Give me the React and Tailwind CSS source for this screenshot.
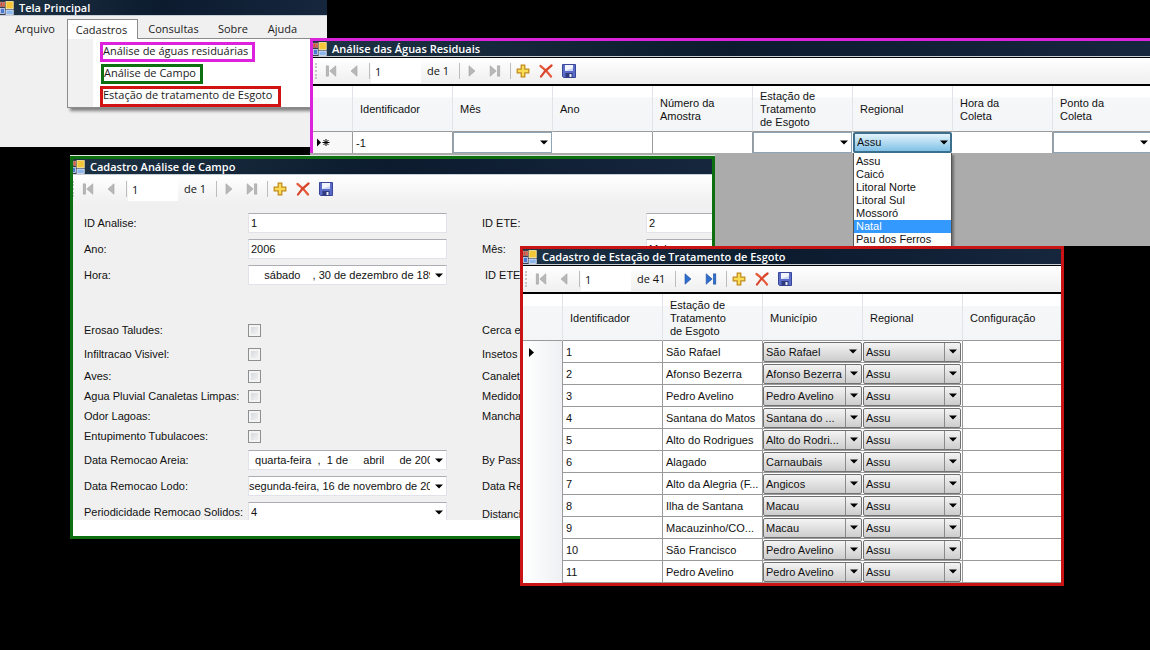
import { useState } from "react";
import clsx from "clsx";

const regionais = ["Assu", "Caicó", "Litoral Norte", "Litoral Sul", "Mossoró", "Natal", "Pau dos Ferros"];

const colunasAguas = [
    { titulo: "Identificador", valor: "-1" },
    { titulo: "Mês", combo: true },
    { titulo: "Ano" },
    { titulo: "Número da\nAmostra" },
    { titulo: "Estação de\nTratamento\nde Esgoto", combo: true },
    { titulo: "Regional", aberto: true },
    { titulo: "Hora da\nColeta" },
    { titulo: "Ponto da\nColeta", combo: true },
];

const estacoes = [
    { id: 1, nome: "São Rafael", municipio: "São Rafael" },
    { id: 2, nome: "Afonso Bezerra", municipio: "Afonso Bezerra" },
    { id: 3, nome: "Pedro Avelino", municipio: "Pedro Avelino" },
    { id: 4, nome: "Santana do Matos", municipio: "Santana do ..." },
    { id: 5, nome: "Alto do Rodrigues", municipio: "Alto do Rodri..." },
    { id: 6, nome: "Alagado", municipio: "Carnaubais" },
    { id: 7, nome: "Alto da Alegria (F...", municipio: "Angicos" },
    { id: 8, nome: "Ilha de Santana", municipio: "Macau" },
    { id: 9, nome: "Macauzinho/CO...", municipio: "Macau" },
    { id: 10, nome: "São Francisco", municipio: "Pedro Avelino" },
    { id: 11, nome: "Pedro Avelino", municipio: "Pedro Avelino" },
];

const verificacoes = [
    ["Erosao Taludes:", "Cerca entorno:"],
    ["Infiltracao Visivel:", "Insetos Aves:"],
    ["Aves:", "Canaletas:"],
    ["Agua Pluvial Canaletas Limpas:", "Medidor:"],
    ["Odor Lagoas:", "Manchas:"],
    ["Entupimento Tubulacoes:", ""],
];

function AppIcon() {
    return (
        <svg width="14" height="14" viewBox="0 0 14 14" className="shrink-0" aria-hidden="true">
            <rect width="14" height="14" fill="#3a3f4c" />
            <rect x="0.5" y="1.5" width="1.8" height="4" fill="#d8452c" stroke="#e9a493" strokeWidth="0.5" />
            <rect x="3" y="1.5" width="1.8" height="4" fill="#d8452c" stroke="#e9a493" strokeWidth="0.5" />
            <rect x="6" y="0.6" width="7.2" height="7" fill="#f2c637" stroke="#fbeeb0" strokeWidth="0.8" />
            <rect x="0.5" y="7.5" width="4" height="5" fill="#4b79cf" stroke="#c9d8f4" strokeWidth="0.8" />
            <rect x="6" y="9" width="7.2" height="4.4" fill="#8fb6ea" stroke="#e2edfb" strokeWidth="0.8" />
        </svg>
    );
}

function Caret() {
    return (
        <svg width="8" height="5" viewBox="0 0 8 5" aria-hidden="true">
            <path d="M0 0.5h8L4 4.5z" fill="#000" />
        </svg>
    );
}

function SetaIcon({ ativo, reverso, barra }) {
    const cor = ativo ? "#2f6fd0" : "#b8b8b8";
    const contorno = ativo ? "#1d4c9c" : "#a2a2a2";
    return (
        <svg width="12" height="12" viewBox="0 0 12 12" className={clsx(reverso && "-scale-x-100")} aria-hidden="true">
            <path d={barra ? "M1.2 0.8v10.4l6-5.2z" : "M3 0.8v10.4l6-5.2z"} fill={cor} stroke={contorno} strokeWidth="0.6" />
            {barra && <rect x="8.4" y="0.9" width="2.4" height="10.2" fill={cor} stroke={contorno} strokeWidth="0.6" />}
        </svg>
    );
}

function AdicionarIcon() {
    return (
        <svg width="14" height="14" viewBox="0 0 14 14" aria-hidden="true">
            <path d="M5.2 1.2h3.6v4h4v3.6h-4v4H5.2v-4h-4V5.2h4z" fill="#fbdc55" stroke="#c08a18" strokeWidth="1.2" />
        </svg>
    );
}

function ExcluirIcon() {
    return (
        <svg width="14" height="14" viewBox="0 0 14 14" aria-hidden="true">
            <path d="M1.5 2C5 4.500 9 8.500 12 12.500" fill="none" stroke="#e65a3c" strokeWidth="2.2" strokeLinecap="round" />
            <path d="M12.500 1.500C8.500 4.500 4.500 8.500 2 12.500" fill="none" stroke="#d8452a" strokeWidth="2.2" strokeLinecap="round" />
        </svg>
    );
}

function SalvarIcon() {
    return (
        <svg width="14" height="14" viewBox="0 0 14 14" aria-hidden="true">
            <path d="M0.500 0.500h13v13h-12l-1-1z" fill="#5b6bc8" stroke="#3a469a" />
            <rect x="3" y="1" width="8" height="6" fill="#f1f4fd" />
            <path d="M3 7h8V4z" fill="#c9d3f2" />
            <rect x="3.500" y="9" width="7" height="4.500" fill="#2f397c" />
            <rect x="7.500" y="10" width="2" height="3" fill="#eef1fb" />
        </svg>
    );
}

function BarraTitulo({ titulo }) {
    return (
        <div className="flex h-4 items-center gap-1 overflow-hidden border-b border-[#c9cfd6] bg-linear-to-r from-[#1d3244] via-[#0c1b2e] to-[#16263d] whitespace-nowrap">
            <AppIcon />
            <h2 className="pl-px font-['Open_Sans',sans-serif] text-[11px] leading-4 font-semibold text-white">{titulo}</h2>
        </div>
    );
}

function Separador() {
    return <span className="ml-1 h-4 w-px bg-[#bdbdbd]" />;
}

function Botao({ rotulo, children, disabled }) {
    return (
        <button type="button" aria-label={rotulo} disabled={disabled} className="flex h-6 w-[23px] items-center justify-center">
            {children}
        </button>
    );
}

function Navegador({ total, ativo, className }) {
    const [posicao, setPosicao] = useState("1");

    return (
        <div className={clsx("flex items-center bg-linear-to-b from-white to-[#efefef] font-['Open_Sans',sans-serif] text-[11px]", className)}>
            <span className="ml-px h-4 w-0 border-l-2 border-dotted border-[#c4c4c4]" />
            <span className="w-0.5" />
            <Botao rotulo="Primeiro" disabled><SetaIcon reverso barra /></Botao>
            <Botao rotulo="Anterior" disabled><SetaIcon reverso /></Botao>
            <Separador />
            <span className="w-px" />
            <input
                aria-label="Posição"
                value={posicao}
                onChange={(e) => setPosicao(e.target.value)}
                className="h-6 w-[50px] bg-white pl-1"
            />
            <span className="px-1.5">de {total}</span>
            <Separador />
            <Botao rotulo="Próximo" disabled={!ativo}><SetaIcon ativo={ativo} /></Botao>
            <Botao rotulo="Último" disabled={!ativo}><SetaIcon ativo={ativo} barra /></Botao>
            <Separador />
            <Botao rotulo="Adicionar"><AdicionarIcon /></Botao>
            <Botao rotulo="Excluir"><ExcluirIcon /></Botao>
            <Botao rotulo="Salvar"><SalvarIcon /></Botao>
        </div>
    );
}

function Cabecalho({ children, className }) {
    return (
        <th
            scope="col"
            className={clsx(
                "border-r border-b border-r-[#e0e3e8] border-b-[#9a9a9a] bg-linear-to-b from-white from-25% via-[#f6f7f9] via-26% to-[#f4f5f7] p-0 pt-0.5 pl-[7px] text-left font-normal whitespace-pre-line",
                className
            )}
        >
            {children}
        </th>
    );
}

function ComboGrade({ rotulo, valor, semDivisao }) {
    return (
        <div className="relative mr-px">
            <select
                aria-label={rotulo}
                defaultValue={valor}
                className="block h-5 w-full appearance-none rounded-xs border border-[#707070] bg-linear-to-b from-[#f4f4f4] to-[#cdcdcd] pl-0.5 leading-4"
            >
                <option>{valor}</option>
            </select>
            <span
                className={clsx(
                    "pointer-events-none absolute inset-y-px right-px flex w-4 items-center justify-center",
                    !semDivisao && "border-l border-[#8a8a8a]"
                )}
            >
                <Caret />
            </span>
        </div>
    );
}

function TelaPrincipal() {
    return (
        <section className="absolute top-0 left-0 h-[147px] w-[327px] bg-[#f0f0f0]">
            <BarraTitulo titulo="Tela Principal" />
            <nav className="flex pt-[3px] pl-[7px] font-['Open_Sans',sans-serif] text-[11px] leading-5 text-[#1c1c1c]">
                <button type="button" className="w-[60px] pr-1 text-center">Arquivo</button>
                <div className="relative">
                    <button type="button" className="relative z-10 h-5 w-[71px] border border-b-0 border-[#8c8c8c] bg-white pr-0.5 leading-4">Cadastros</button>
                    <ul className="absolute top-[19px] left-0 flex h-[70px] w-[255px] flex-col items-start gap-0.5 border border-[#8c8c8c] bg-linear-to-r from-[#f1f1f1] from-10% to-white to-10% pt-[3px] pl-8 whitespace-nowrap shadow-[3px_3px_3px_#808080]">
                        <li className="h-5 border-3 border-[#dd22dd] leading-3">
                            <a href="#aguas" className="pr-1">Análise de águas residuárias</a>
                        </li>
                        <li className="ml-px h-5 border-3 border-[#0c7010] leading-3">
                            <a href="#campo" className="pr-1">Análise de Campo</a>
                        </li>
                        <li className="h-[21px] border-3 border-[#d01212] leading-3">
                            <a href="#estacao" className="pr-1.5">Estação de tratamento de Esgoto</a>
                        </li>
                    </ul>
                </div>
                <button type="button" className="w-[71px] text-center">Consultas</button>
                <button type="button" className="w-12 text-center">Sobre</button>
                <button type="button" className="w-[51px] text-center">Ajuda</button>
            </nav>
        </section>
    );
}

function AnaliseAguas() {
    const [regional, setRegional] = useState("Assu");

    return (
        <section id="aguas" className="absolute top-[38px] right-0 left-[310px] h-[208px] overflow-hidden bg-[#ababab]">
            <div className="border-t-3 border-l-3 border-[#dd22dd]">
                <BarraTitulo titulo="Análise das Águas Residuais" />
                <Navegador total={1} className="h-[29px] border-t border-b-2 border-black pl-px" />
                <table className="w-[840px] table-fixed border-separate border-spacing-0 leading-[13px]">
                    <colgroup>
                        <col className="w-10" />
                        {colunasAguas.map((c) => <col key={c.titulo} className="w-[100px]" />)}
                    </colgroup>
                    <thead>
                        <tr className="h-[46px]">
                            <Cabecalho className="border-r-[#9a9a9a]" />
                            {colunasAguas.map((c) => <Cabecalho key={c.titulo}>{c.titulo}</Cabecalho>)}
                        </tr>
                    </thead>
                    <tbody>
                        <tr className="h-[21px] bg-white">
                            <th scope="row" className="border-r border-[#9a9a9a] bg-[#f8f8f8] p-0 pl-1">
                                <svg width="14" height="9" viewBox="0 0 14 9" aria-hidden="true">
                                    <path d="M0 0.500v8l4-4z" fill="#000" />
                                    <path d="M9 1v7M5.500 4.500h7M6.500 2l5 5M11.500 2l-5 5" stroke="#000" />
                                </svg>
                            </th>
                            {colunasAguas.map((c) => (
                                <td key={c.titulo} className={clsx("p-0", !c.combo && !c.aberto && "border-r border-[#9a9a9a] pt-0.5 pl-[3px]")}>
                                    {c.valor}
                                    {c.combo && (
                                        <div className="relative mr-px">
                                            <select aria-label={c.titulo} className="block h-[21px] w-full appearance-none border border-[#8fa5b5] bg-white">
                                                <option></option>
                                            </select>
                                            <span className="pointer-events-none absolute inset-y-0 right-1 flex items-center"><Caret /></span>
                                        </div>
                                    )}
                                    {c.aberto && (
                                        <div className="relative mr-px">
                                            <select
                                                aria-label="Regional"
                                                value={regional}
                                                onChange={(e) => setRegional(e.target.value)}
                                                className="block h-[21px] w-full appearance-none rounded-xs border-2 border-[#3c6f8c] bg-linear-to-b from-[#e3f3fb] to-[#7fc1e6] pl-0.5"
                                            >
                                                {regionais.map((r) => <option key={r}>{r}</option>)}
                                            </select>
                                            <span className="pointer-events-none absolute inset-y-0 right-1 flex items-center"><Caret /></span>
                                            <ul className="absolute top-full left-0 w-full border-x border-[#555] bg-white pt-0.5 shadow-[2px_2px_2px_#707070]">
                                                {regionais.map((r) => (
                                                    <li key={r} className={clsx("pl-0.5", r === "Natal" && "bg-[#3399ff] text-white")}>{r}</li>
                                                ))}
                                            </ul>
                                        </div>
                                    )}
                                </td>
                            ))}
                        </tr>
                    </tbody>
                </table>
            </div>
        </section>
    );
}

function Campo({ id, valor, seta }) {
    return (
        <div className="relative">
            <input
                id={id}
                defaultValue={valor}
                className={clsx("block h-5 w-full border border-[#e2e3ea] border-t-[#abadb3] bg-white", seta ? "pr-4" : "pl-0.5")}
            />
            {seta && <span className="absolute inset-y-0 right-1 flex items-center"><Caret /></span>}
        </div>
    );
}

function AnaliseCampo() {
    return (
        <section id="campo" className="absolute top-[156px] left-[70px] w-[645px] overflow-hidden border-3 border-[#0c7010] bg-white shadow-[0_-1px_#dfe8df]">
            <div className="-ml-0.5">
                <BarraTitulo titulo="Cadastro Análise de Campo" />
                <Navegador total={1} className="h-7 to-[#f0f0f0]" />
            </div>
            <form className="h-[317px] overflow-hidden bg-[#f0f0f0] pt-[7px] pl-[11px]">
                <div className="grid auto-rows-[26px] grid-cols-[164px_199px_35px_164px_199px] items-center">
                    <label htmlFor="idAnalise">ID Analise:</label>
                    <Campo id="idAnalise" valor="1" />
                    <label htmlFor="idEte" className="col-start-4">ID ETE:</label>
                    <Campo id="idEte" valor="2" />
                    <label htmlFor="ano">Ano:</label>
                    <Campo id="ano" valor="2006" />
                    <label htmlFor="mes" className="col-start-4">Mês:</label>
                    <Campo id="mes" valor="Maio" />
                    <label htmlFor="hora">Hora:</label>
                    <Campo id="hora" valor={"     sábado    , 30 de dezembro de 1899"} seta />
                    <span className="col-start-4 pl-[3px]">ID ETE:</span>
                </div>
                <div className="mt-[30px] mb-px grid grid-cols-[164px_199px_35px_164px] grid-rows-[24px_24px_20px_20px_20px_20px] items-center">
                    {verificacoes.map(([rotulo, outro], i) => (
                        <div key={rotulo} className="col-span-4 grid grid-cols-subgrid items-center">
                            <label htmlFor={`verif${i}`}>{rotulo}</label>
                            <input
                                id={`verif${i}`}
                                type="checkbox"
                                className="size-[13px] appearance-none border border-[#8e8f8f] bg-linear-to-br from-[#cfd3d8] to-[#f8f8f8] outline-2 -outline-offset-3 outline-[#f4f4f4] checked:bg-[#3399ff]"
                            />
                            <span className="col-start-4">{outro}</span>
                        </div>
                    ))}
                </div>
                <div className="grid auto-rows-[26px] grid-cols-[164px_199px_35px_164px] items-center">
                    <label htmlFor="areia">Data Remocao Areia:</label>
                    <Campo id="areia" valor={"  quarta-feira  ,  1 de     abril     de 2009"} seta />
                    <span className="col-start-4">By Pass:</span>
                    <label htmlFor="lodo">Data Remocao Lodo:</label>
                    <Campo id="lodo" valor="segunda-feira, 16 de novembro de 2009" seta />
                    <span className="col-start-4">Data Reforma:</span>
                    <label htmlFor="periodicidade">Periodicidade Remocao Solidos:</label>
                    <div className="relative">
                        <select id="periodicidade" className="block h-5 w-full appearance-none border border-[#e2e3ea] border-t-[#abadb3] bg-white pl-0.5">
                            <option>4</option>
                        </select>
                        <span className="pointer-events-none absolute inset-y-0 right-1 flex items-center"><Caret /></span>
                    </div>
                    <span className="col-start-4 pt-1">Distancia:</span>
                </div>
            </form>
            <div className="h-4" />
        </section>
    );
}

function CadastroEstacao() {
    return (
        <section id="estacao" className="absolute top-[246px] left-[520px] w-[544px] overflow-hidden border-3 border-[#c81414] bg-white">
            <BarraTitulo titulo="Cadastro de Estação de Tratamento de Esgoto" />
            <Navegador total={41} ativo className="h-[29px] border-t border-b-2 border-black pl-px" />
            <table className="w-full table-fixed border-separate border-spacing-0 leading-[13px]">
                <colgroup>
                    <col className="w-10" />
                    <col className="w-[100px]" />
                    <col className="w-[100px]" />
                    <col className="w-[100px]" />
                    <col className="w-[100px]" />
                    <col />
                </colgroup>
                <thead>
                    <tr className="h-[47px]">
                        <Cabecalho className="border-r-[#9a9a9a]" />
                        <Cabecalho>Identificador</Cabecalho>
                        <Cabecalho>{"Estação de\nTratamento\nde Esgoto"}</Cabecalho>
                        <Cabecalho>Município</Cabecalho>
                        <Cabecalho>Regional</Cabecalho>
                        <Cabecalho>Configuração</Cabecalho>
                    </tr>
                </thead>
                <tbody>
                    {estacoes.map((e, i) => (
                        <tr key={e.id} className="h-[22px]">
                            <th scope="row" className="border-r border-[#9a9a9a] bg-linear-to-r from-white to-[#eef0f3] p-0 pl-1.5">
                                {i === 0 && (
                                    <svg width="5" height="9" viewBox="0 0 5 9" aria-hidden="true">
                                        <path d="M0 0v9l5-4.500z" fill="#000" />
                                    </svg>
                                )}
                            </th>
                            <td className="border-r border-b border-[#9a9a9a] p-0 pt-0.5 pl-[3px]">{e.id}</td>
                            <td className="border-r border-b border-[#9a9a9a] p-0 pt-0.5 pl-[3px] whitespace-nowrap">{e.nome}</td>
                            <td className="border-b border-[#9a9a9a] p-0"><ComboGrade rotulo="Município" valor={e.municipio} semDivisao={i === 0} /></td>
                            <td className="border-r border-b border-[#9a9a9a] p-0"><ComboGrade rotulo="Regional" valor="Assu" /></td>
                            <td className="border-b border-[#9a9a9a] p-0" />
                        </tr>
                    ))}
                </tbody>
            </table>
        </section>
    );
}

export default function App() {
    return (
        <main className="relative h-screen min-h-[600px] overflow-hidden bg-black font-['Liberation_Sans',sans-serif] text-[11px] text-[#111]">
            <TelaPrincipal />
            <AnaliseAguas />
            <AnaliseCampo />
            <CadastroEstacao />
        </main>
    );
}
